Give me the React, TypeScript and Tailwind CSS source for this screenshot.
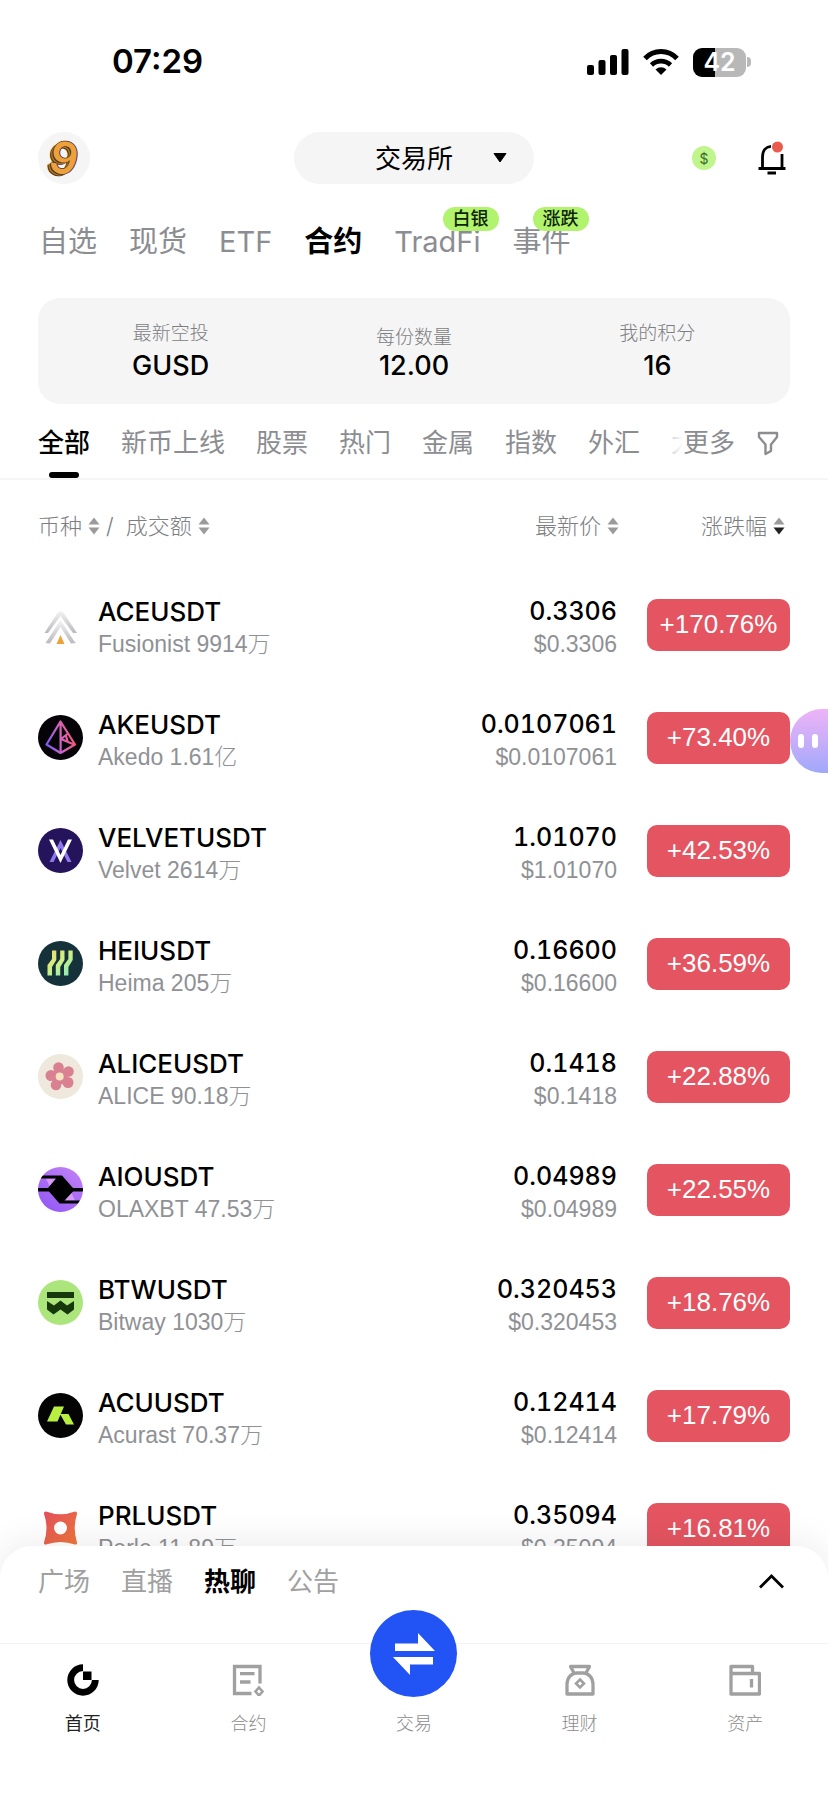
import React from 'react'
import clsx from 'clsx'

const marketTabs = [
  { label: '自选' },
  { label: '现货' },
  { label: 'ETF' },
  { label: '合约', active: true },
  { label: 'TradFi', badge: '白银' },
  { label: '事件', badge: '涨跌' },
]

const categories = ['全部', '新币上线', '股票', '热门', '金属', '指数', '外汇', '大宗']

const feedTabs = ['广场', '直播', '热聊', '公告']

const AceLogo = () => (
  <svg viewBox="0 0 45 45" className="size-[45px] shrink-0">
    <defs>
      <linearGradient id="ace" x1="0" y1="0" x2="0" y2="1">
        <stop offset="0" stopColor="#f4f4f4" />
        <stop offset="1" stopColor="#b9b9be" />
      </linearGradient>
    </defs>
    <path d="M20 10 22.500 9 25 10 39 31 35 31 22.500 14 10 31 6.500 31Z" fill="url(#ace)" />
    <path d="M22.500 18 36 39 38 41 33 41.500 22.500 25 12 41.500 7.500 41 9.500 38Z" fill="url(#ace)" />
    <path d="M22.500 33 26.500 42 18.500 42Z" fill="#eea23c" />
  </svg>
)

const AkeLogo = () => (
  <svg viewBox="0 0 45 45" className="size-[45px] shrink-0">
    <defs>
      <linearGradient id="ake" gradientUnits="userSpaceOnUse" x1="8" y1="26" x2="37" y2="20">
        <stop offset="0" stopColor="#7a5cf0" />
        <stop offset="0.500" stopColor="#d565c5" />
        <stop offset="1" stopColor="#f0576a" />
      </linearGradient>
    </defs>
    <circle cx="22.500" cy="22.500" r="22.500" fill="#050308" />
    <path
      d="M22.500 6.500 8.500 29.500 22.500 38 37 29.500ZM22.600 7V37.500M23 24 30 18.500M23 24 36 29.500M28 21 29.500 26"
      fill="none"
      stroke="url(#ake)"
      strokeWidth="2.200"
      strokeLinejoin="round"
    />
  </svg>
)

const VelvetLogo = () => (
  <svg viewBox="0 0 45 45" className="size-[45px] shrink-0">
    <circle cx="22.500" cy="22.500" r="22.500" fill="#25135c" />
    <path d="M22.500 12 33.500 34H29.500L22.500 20 15.500 34H11.500Z" fill="#8d78ee" />
    <path d="M11 11.500H15L22.500 27 30 11.500H34L22.500 35Z" fill="#fff" />
  </svg>
)

const HeiLogo = () => (
  <svg viewBox="0 0 45 45" className="size-[45px] shrink-0">
    <defs>
      <linearGradient id="hei" gradientUnits="userSpaceOnUse" x1="10" y1="9" x2="32" y2="35">
        <stop offset="0" stopColor="#f3dc6b" />
        <stop offset="0.500" stopColor="#cdef86" />
        <stop offset="1" stopColor="#85edbb" />
      </linearGradient>
    </defs>
    <circle cx="22.500" cy="22.500" r="22.500" fill="#15323a" />
    {['M14 9.500H18.300V19L14 26V34.500H9.500V24L14 18Z', 'M22.200 9.500H26.500V19L22.200 26V34.500H17.800V24L22.200 18Z', 'M30.400 9.500H34.700V19L30.400 26V34.500H26V24L30.400 18Z'].map((d) => (
      <path key={d} d={d} fill="url(#hei)" />
    ))}
  </svg>
)

const AliceLogo = () => (
  <svg viewBox="0 0 45 45" className="size-[45px] shrink-0">
    <circle cx="22.500" cy="22.500" r="22.500" fill="#efe8dc" />
    <g fill="#d98092">
      <circle cx="20.500" cy="13.500" r="5.300" />
      <circle cx="30.500" cy="17.500" r="5.300" />
      <circle cx="30" cy="28.500" r="5.500" />
      <circle cx="18" cy="31" r="5.300" />
      <circle cx="13" cy="21.500" r="5.500" />
      <circle cx="22" cy="22.500" r="8" />
    </g>
    <circle cx="21.700" cy="22.500" r="4" fill="#f8e3c0" />
  </svg>
)

const AioLogo = () => (
  <svg viewBox="0 0 45 45" className="size-[45px] shrink-0">
    <defs>
      <linearGradient id="aio" x1="0" y1="1" x2="0.700" y2="0">
        <stop offset="0" stopColor="#8f55f5" />
        <stop offset="1" stopColor="#bd7ef6" />
      </linearGradient>
      <clipPath id="aioClip">
        <circle cx="22.500" cy="22.500" r="22.500" />
      </clipPath>
    </defs>
    <g clipPath="url(#aioClip)">
      <rect width="45" height="45" fill="url(#aio)" />
      <path d="M12 20 18 11.500H8ZM33 25 27 33.500H37Z" fill="#d79bf7" />
      <path
        d="M2 8.500H24L35 21H45V24.500H35L26.500 33.500H42L40 36.500H21.500L11 24.500H0V21H10L18 11.500H2Z"
        fill="#000"
      />
    </g>
  </svg>
)

const BtwLogo = () => (
  <svg viewBox="0 0 45 45" className="size-[45px] shrink-0">
    <circle cx="22.500" cy="22.500" r="22.500" fill="#ade57d" />
    <path
      d="M9 12H36V18H9ZM9 21 16 25.500 22.500 20.500 29 25.500 36 21V29.500L29.500 34.500 22.500 29.500 15.500 34.500 9 29.500Z"
      fill="#17370c"
    />
  </svg>
)

const AcuLogo = () => (
  <svg viewBox="0 0 45 45" className="size-[45px] shrink-0">
    <circle cx="22.500" cy="22.500" r="22.500" fill="#040404" />
    <path d="M16 13.500H26L19.500 28.500H9ZM22 21H30.500L36 31.500H28Z" fill="#b8ef41" />
  </svg>
)

const PrlLogo = () => (
  <svg viewBox="0 0 45 45" className="size-[45px] shrink-0">
    <defs>
      <linearGradient id="prl" x1="0" y1="0" x2="1" y2="1">
        <stop offset="0" stopColor="#e2505b" />
        <stop offset="1" stopColor="#f0773a" />
      </linearGradient>
    </defs>
    <path
      d="M8 5.500Q22.500 11 37 5.500Q39.500 5.500 39 8Q34.500 22 39 36.500Q39.500 39 37 38.500Q22.500 33.500 8 38.500Q5.500 39 6 36.500Q11 22 6 8Q5.500 5.500 8 5.500Z"
      fill="url(#prl)"
    />
    <circle cx="22.500" cy="22" r="6.500" fill="#fff" />
  </svg>
)

const coins = [
  { pair: 'ACEUSDT', name: 'Fusionist 9914万', price: '0.3306', change: '+170.76%', Logo: AceLogo },
  { pair: 'AKEUSDT', name: 'Akedo 1.61亿', price: '0.0107061', change: '+73.40%', Logo: AkeLogo },
  { pair: 'VELVETUSDT', name: 'Velvet 2614万', price: '1.01070', change: '+42.53%', Logo: VelvetLogo },
  { pair: 'HEIUSDT', name: 'Heima 205万', price: '0.16600', change: '+36.59%', Logo: HeiLogo },
  { pair: 'ALICEUSDT', name: 'ALICE 90.18万', price: '0.1418', change: '+22.88%', Logo: AliceLogo },
  { pair: 'AIOUSDT', name: 'OLAXBT 47.53万', price: '0.04989', change: '+22.55%', Logo: AioLogo },
  { pair: 'BTWUSDT', name: 'Bitway 1030万', price: '0.320453', change: '+18.76%', Logo: BtwLogo },
  { pair: 'ACUUSDT', name: 'Acurast 70.37万', price: '0.12414', change: '+17.79%', Logo: AcuLogo },
  { pair: 'PRLUSDT', name: 'Perle 11.89万', price: '0.35094', change: '+16.81%', Logo: PrlLogo },
]

const SortArrows = ({ down = false }: { down?: boolean }) => (
  <svg viewBox="0 0 12 18" className="h-[18px] w-3">
    <path d="M6 0.500 11.500 7.500H0.500Z" fill="#9b9b9b" />
    <path d="M6 17.500 11.500 10.500H0.500Z" fill={down ? '#222' : '#9b9b9b'} />
  </svg>
)

const SortButton = ({ label, down }: { label: string; down?: boolean }) => (
  <button className="flex items-center gap-[6px]">
    {label}
    <SortArrows down={down} />
  </button>
)

const StatusBar = () => (
  <div className="flex h-[84px] items-center justify-between pt-10 pr-[77px] pl-[112px]">
    <div className="text-[33px] font-semibold">07:29</div>
    <div className="flex items-center gap-[14px]">
      <svg viewBox="0 0 42 26" className="h-[26px] w-[42px]">
        <rect x="0" y="16" width="7" height="10" rx="2" />
        <rect x="11.500" y="11" width="7" height="15" rx="2" />
        <rect x="23" y="6" width="7" height="20" rx="2" />
        <rect x="34.500" y="0" width="7" height="26" rx="2" />
      </svg>
      <svg viewBox="0 0 36 26" className="h-[26px] w-9">
        <path d="M2 9.500A22 22 0 0 1 34 9.500" fill="none" stroke="#000" strokeWidth="5" />
        <path d="M8.500 16A13.500 13.500 0 0 1 27.500 16" fill="none" stroke="#000" strokeWidth="4.600" />
        <path d="M12.500 20.500A8 8 0 0 1 23.500 20.500L18 26Z" />
      </svg>
      {/* battery */}
      <div className="flex items-center gap-px">
        <div className="flex h-[29px] w-[53px] items-center justify-center rounded-[9px] bg-linear-to-r from-black from-42% to-[#b8b8b8] to-42% text-[25px] leading-none font-semibold text-white">
          42
        </div>
        <div className="h-[10px] w-1 rounded-r-full bg-[#b8b8b8]" />
      </div>
    </div>
  </div>
)

const Header = () => (
  <header className="mt-12 flex h-[52px] items-center justify-between px-[38px]">
    <div className="flex flex-1">
      <button
        aria-label="profile"
        className="flex size-[52px] items-center justify-center rounded-full bg-[#f5f5f5]"
      >
        <span className="rotate-[14deg] text-[44px] leading-none font-semibold text-[#eda03b] [text-shadow:1px_0_0_#4a3218,0_-1px_0_#4a3218,-1px_1px_0_#4a3218,-2px_2px_0_#b67a2c,-3px_3px_0_#4a3218]">
          9
        </span>
      </button>
    </div>
    <button className="flex h-[52px] w-60 items-center justify-end gap-10 rounded-full bg-[#f5f5f5] pr-[27px] text-[26px]">
      交易所
      <svg viewBox="0 0 14 10" className="h-[10px] w-[14px]">
        <path d="M1 0.500H13L7 9Z" stroke="#000" strokeLinejoin="round" />
      </svg>
    </button>
    <div className="flex flex-1 items-center justify-end gap-[42px]">
      <button className="flex size-6 items-center justify-center rounded-full bg-[#bff58b] text-[14px] text-[#3b6a2c]">
        $
      </button>
      <button aria-label="notifications" className="mr-1">
        <svg viewBox="0 0 28 34" className="h-[34px] w-7">
          <path
            d="M0.500 27.500H27.500M4.500 27V16C4.500 9 8.500 5.500 13 5.300M24 13V27M9.500 32H18"
            fill="none"
            stroke="#000"
            strokeWidth="2.800"
          />
          <circle cx="19.500" cy="6" r="5.500" fill="#e85b4e" />
        </svg>
      </button>
    </div>
  </header>
)

const tradeArrows = (
  <svg viewBox="0 0 42 42" className="size-[42px]" fill="#fff">
    <path d="M2 10.500H25V0L42 18H2Z" />
    <path d="M40 24H0L17 42V31.500H40Z" />
  </svg>
)

const navItems = [
  {
    label: '首页',
    active: true,
    icon: (
      <svg viewBox="0 0 32 32" className="size-8">
        <path d="M16 3.700A12.300 12.300 0 1 0 28.300 16" fill="none" stroke="#000" strokeWidth="6.800" />
        <rect x="16" y="7.500" width="8.500" height="8.500" />
      </svg>
    ),
  },
  {
    label: '合约',
    icon: (
      <svg viewBox="0 0 32 32" className="size-8" fill="none" stroke="#a0a0a0" strokeWidth="3.300">
        <path d="M19.500 29.500H2.500V2.500H28V19.500M8 9.700H22.500M8 18H18.500" />
        <path d="M27 23.500 30.500 27.500 27 31.500 23.500 27.500Z" strokeWidth="2.600" />
      </svg>
    ),
  },
  { label: '交易' },
  {
    label: '理财',
    icon: (
      <svg viewBox="0 0 32 32" className="size-8" fill="none" stroke="#a0a0a0" strokeWidth="3.300">
        <path d="M10 9 6.500 2.500H25.500L22 9M3 30V21C3 13 8 9 13 9H19C24 9 29 13 29 21V30Z" strokeLinejoin="round" />
        <path d="M16 15.500 20 19.500 16 23.500 12 19.500Z" strokeWidth="2.600" />
      </svg>
    ),
  },
  {
    label: '资产',
    icon: (
      <svg viewBox="0 0 32 32" className="size-8" fill="none" stroke="#a0a0a0" strokeWidth="3.300">
        <path d="M2 9.500V2.500H23.500V9M2 9.500H30.500V30H2ZM22.500 15V23.500" strokeLinejoin="round" />
      </svg>
    ),
  },
]

const Footer = () => (
  <footer className="relative z-10 shrink-0 rounded-t-[32px] bg-white shadow-[0_-4px_36px_rgba(0,0,0,0.08)]">
    {/* feed tabs */}
    <div className="flex h-[97px] items-start justify-between px-[38px] pt-4">
      <div className="flex gap-[31px]">
        {feedTabs.map((tab) => (
          <button
            key={tab}
            className={clsx('text-[26px] leading-10', tab === '热聊' ? 'font-semibold' : 'text-[#a0a0a0]')}
          >
            {tab}
          </button>
        ))}
      </div>
      <button aria-label="expand" className="flex h-[38px] items-center pr-[5px]">
        <svg viewBox="0 0 28 16" className="h-4 w-7" fill="none" stroke="#000" strokeWidth="2.800">
          <path d="M3 14.500 14.500 3 26 14.500" />
        </svg>
      </button>
    </div>
    {/* bottom nav */}
    <nav className="grid grid-cols-5 border-t border-[#f3f3f3] pb-16">
      {navItems.map((item) => (
        <a key={item.label} href="#" className="flex flex-col items-center gap-4 pt-5">
          {item.icon ? (
            item.icon
          ) : (
            <span className="-mt-[54px] -mb-px flex size-[87px] items-center justify-center rounded-full bg-[#2253f4]">
              {tradeArrows}
            </span>
          )}
          <span className={clsx('text-[18px] leading-6', item.active ? 'text-[#222]' : 'font-light text-[#8c8c8c]')}>
            {item.label}
          </span>
        </a>
      ))}
    </nav>
  </footer>
)

const App = () => {
  return (
    <div className="relative flex h-screen w-full flex-col overflow-hidden bg-white font-['Inter','Noto_Sans_CJK_SC',sans-serif] text-black">
      <StatusBar />
      <Header />
      {/* market tabs */}
      <nav className="mt-[38px] flex gap-8 px-[39px]">
        {marketTabs.map((tab) => (
          <a
            key={tab.label}
            href="#"
            className={clsx(
              'relative text-[29px] leading-10',
              tab.active ? 'font-semibold' : 'text-[#8b8d91]',
            )}
          >
            {tab.label}
            {tab.badge && (
              <span className="absolute -top-[15px] -right-[18px] rounded-full bg-[#b1f36c] px-[10px] text-[18px] leading-6 font-medium whitespace-nowrap text-[#0e2408]">
                {tab.badge}
              </span>
            )}
          </a>
        ))}
      </nav>
      {/* airdrop card */}
      <section className="mx-[38px] mt-9 grid h-[106px] shrink-0 grid-cols-3 rounded-[22px] bg-[#f5f5f5] px-[11px] pb-[22px] text-center">
        <div className="flex flex-col justify-end gap-1">
          <div className="text-[19px] leading-6 font-light text-[#7c7e82]">最新空投</div>
          <div className="text-[27px] leading-8 font-medium">GUSD</div>
        </div>
        <div className="flex flex-col justify-end">
          <div className="text-[19px] leading-6 font-light text-[#7c7e82]">每份数量</div>
          <div className="text-[27px] leading-8 font-medium">12.00</div>
        </div>
        <div className="flex flex-col justify-end gap-1">
          <div className="text-[19px] leading-6 font-light text-[#7c7e82]">我的积分</div>
          <div className="text-[27px] leading-8 font-medium">16</div>
        </div>
      </section>
      {/* category tabs */}
      <div className="flex h-[76px] shrink-0 items-start border-b-2 border-[#f6f6f6] pr-[49px] pl-[38px]">
        <div className="relative flex h-full min-w-0 flex-1 gap-[31px] overflow-hidden">
          {categories.map((category, i) => (
            <button
              key={category}
              className={clsx(
                'relative flex shrink-0 items-start pt-5 text-[26px] leading-[38px]',
                i === 0 ? 'font-medium' : 'text-[#8b8d91]',
              )}
            >
              {category}
              {i === 0 && (
                <span className="absolute bottom-0 left-1/2 h-[6px] w-[30px] -translate-x-1/2 rounded-full bg-black" />
              )}
            </button>
          ))}
          <div className="absolute inset-y-0 right-0 w-4 bg-linear-to-r from-white/50 to-white" />
        </div>
        <button className="pt-5 text-[26px] leading-[38px] text-[#8b8d91]">更多</button>
        <button aria-label="filter" className="flex h-[78px] items-center pl-[22px]">
          <svg viewBox="0 0 22 25" className="h-[25px] w-[22px]" fill="none" stroke="#8b8d91" strokeWidth="2.400">
            <path d="M2 2H20V6L14 13.500V20L8.500 23V13.500L2 6Z" strokeLinejoin="round" />
          </svg>
        </button>
      </div>
      {/* coin list */}
      <main className="min-h-0 flex-1 overflow-hidden px-[38px]">
        <table className="w-full tabular-nums">
          <thead>
            <tr className="h-[88px] text-[22px] text-[#7c7e82]">
              <th className="pt-1 font-light">
                <div className="flex items-center">
                  <SortButton label="币种" />
                  <span className="pr-3 pl-[6px]">/</span>
                  <SortButton label="成交额" />
                </div>
              </th>
              <th className="pt-1 font-light">
                <div className="flex justify-end">
                  <SortButton label="最新价" />
                </div>
              </th>
              <th className="w-[171px] pt-1 font-light">
                <div className="flex justify-end pr-[5px]">
                  <SortButton label="涨跌幅" down />
                </div>
              </th>
            </tr>
          </thead>
          <tbody>
            {coins.map(({ pair, name, price, change, Logo }) => (
              <tr key={pair} className="h-[113px]">
                <td className="p-0">
                  <div className="flex items-center gap-[15px]">
                    <Logo />
                    <div className="pt-[6px] leading-[33px]">
                      <div className="text-[26px] font-medium">{pair}</div>
                      <div className="font-['Liberation_Sans','Noto_Sans_CJK_SC',sans-serif] text-[23px] font-light text-[#8f9195]">
                        {name}
                      </div>
                    </div>
                  </div>
                </td>
                <td className="p-0 text-right">
                  <div className="pt-[6px] pr-[2px] leading-[33px]">
                    <div className="text-[25px] font-medium">{price}</div>
                    <div className="font-['Liberation_Sans',sans-serif] text-[23px] font-light text-[#8f9195]">
                      ${price}
                    </div>
                  </div>
                </td>
                <td className="p-0">
                  <button className="ml-auto flex h-[52px] w-[143px] items-center justify-center rounded-[10px] bg-[#e45561] font-['Liberation_Sans',sans-serif] text-[26px] text-white">
                    {change}
                  </button>
                </td>
              </tr>
            ))}
          </tbody>
        </table>
      </main>
      {/* assistant */}
      <button
        aria-label="assistant"
        className="absolute top-[709px] right-0 flex h-16 w-[38px] items-center gap-2 rounded-l-full bg-linear-to-b from-[#eeb3f6] to-[#9fa8fb] pl-2"
      >
        <span className="h-[14px] w-[6px] rounded-full bg-white" />
        <span className="h-[14px] w-[6px] rounded-full bg-white" />
      </button>
      <Footer />
    </div>
  )
}

export default App
